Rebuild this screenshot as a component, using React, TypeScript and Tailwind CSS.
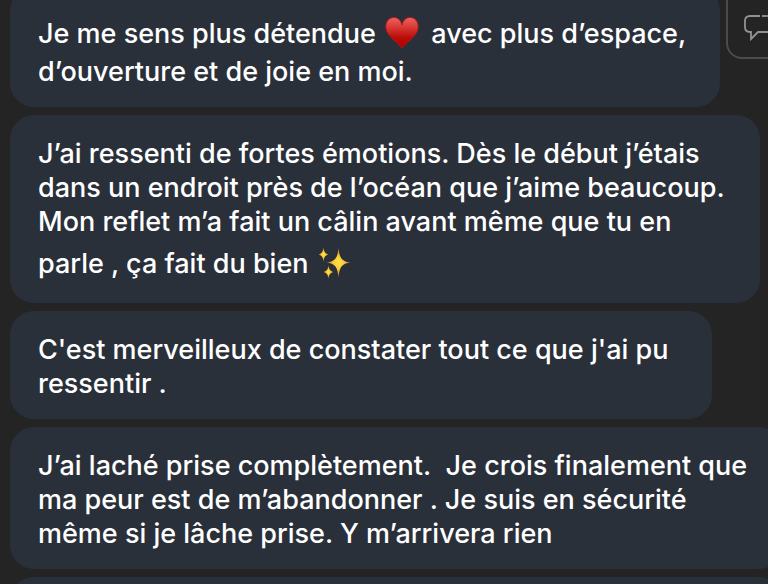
import type { ReactNode } from "react";

function Heart() {
    return (
        <span role="img" aria-label="❤️" className="mr-1 ml-px inline-flex h-[46px] w-9 items-end justify-center pb-[5px] align-[-7px]">
            <svg width="34" height="34" viewBox="0 -1 34 34">
                <defs>
                    <linearGradient id="heart" x1="0" y1="0" x2="0" y2="1">
                        <stop offset="0" stopColor="#ee6260" />
                        <stop offset="0.3" stopColor="#db3c39" />
                        <stop offset="0.65" stopColor="#bb0d08" />
                        <stop offset="1" stopColor="#b00000" />
                    </linearGradient>
                </defs>
                <path
                    d="M17 8C16 3.500 13 0.500 9 0.500C4 0.500 0.800 4.500 0.800 10C0.800 18 10 23 17 31C24 23 33.200 18 33.200 10C33.200 4.500 30 0.500 25 0.500C21 0.500 18 3.500 17 8Z"
                    fill="url(#heart)"
                    stroke="#b41613"
                    strokeWidth="0.8"
                />
            </svg>
        </span>
    );
}

function Sparkles() {
    return (
        <span role="img" aria-label="✨" className="mr-1 ml-px inline-flex h-[46px] w-9 items-end justify-center pb-[5px] align-[-7px]">
            <svg width="34" height="34" viewBox="0 0 34 34">
                <defs>
                    <radialGradient id="spark">
                        <stop offset="0" stopColor="#ffe14a" />
                        <stop offset="0.45" stopColor="#fbc934" />
                        <stop offset="1" stopColor="#a8641c" />
                    </radialGradient>
                </defs>
                <g fill="url(#spark)">
                    <path d="M20.5 1.500C21.4 12 23.5 15.6 33 16.5C23.5 17.4 21.4 21 20.5 32C19.6 21 17.5 17.4 8 16.5C17.5 15.6 19.6 12 20.5 1.500Z" />
                    <path d="M5.500 1C6 6 7 7.500 10.500 8.500C7 9.500 6 11 5.500 16C5 11 4 9.500 0.500 8.500C4 7.500 5 6 5.500 1Z" />
                    <path d="M10.500 19C11 23.500 12 25 15.500 26C12 27 11 28.500 10.500 33C10 28.500 9 27 5.500 26C9 25 10 23.500 10.500 19Z" />
                </g>
            </svg>
        </span>
    );
}

function Bubble({ className, children }: { className: string; children: ReactNode }) {
    return (
        <p className={`shrink-0 rounded-3xl bg-[#2a303a] px-7 pt-[22px] pb-[18px] whitespace-nowrap ${className}`}>
            {children}
        </p>
    );
}

export default function App() {
    return (
        <main className="h-screen overflow-hidden bg-[#242424] pl-2.5 font-['Inter',sans-serif] text-[27px] leading-[34px] font-medium text-white">
            <div className="-mt-[13px] flex flex-col gap-2">
                <div className="flex items-start gap-1.5">
                    <Bubble className="w-[710px]">
                        Je me sens plus détendue <Heart /> avec plus d’espace,
                        <br />
                        d’ouverture et de joie en moi.
                    </Bubble>
                    <button
                        aria-label="Répondre"
                        className="flex h-[72px] w-20 shrink-0 items-center rounded-2xl border-2 border-[#4b4b4b] pt-2.5 pl-4"
                    >
                        <svg width="40" height="28" viewBox="0 0 40 28" fill="none" stroke="#929292" strokeWidth="1.8">
                            <path d="M16 2H6Q1 2 1 7V13Q1 18 6 18H7V25L14 18H28Q33 18 33 13V7" />
                            <path d="M18 2H28" />
                        </svg>
                    </button>
                </div>
                <Bubble className="w-full max-w-[750px]">
                    J’ai ressenti de fortes émotions. Dès le début j’étais
                    <br />
                    dans un endroit près de l’océan que j’aime beaucoup.
                    <br />
                    Mon reflet m’a fait un câlin avant même que tu en
                    <br />
                    parle , ça fait du bien <Sparkles />
                </Bubble>
                <Bubble className="w-full max-w-[702px]">
                    C'est merveilleux de constater tout ce que j'ai pu
                    <br />
                    ressentir .
                </Bubble>
                <Bubble className="w-[772px]">
                    J’ai laché prise complètement.&nbsp; Je crois finalement que
                    <br />
                    ma peur est de m’abandonner . Je suis en sécurité
                    <br />
                    même si je lâche prise. Y m’arrivera rien
                </Bubble>
                <Bubble className="w-[772px]">&nbsp;</Bubble>
            </div>
        </main>
    );
}
